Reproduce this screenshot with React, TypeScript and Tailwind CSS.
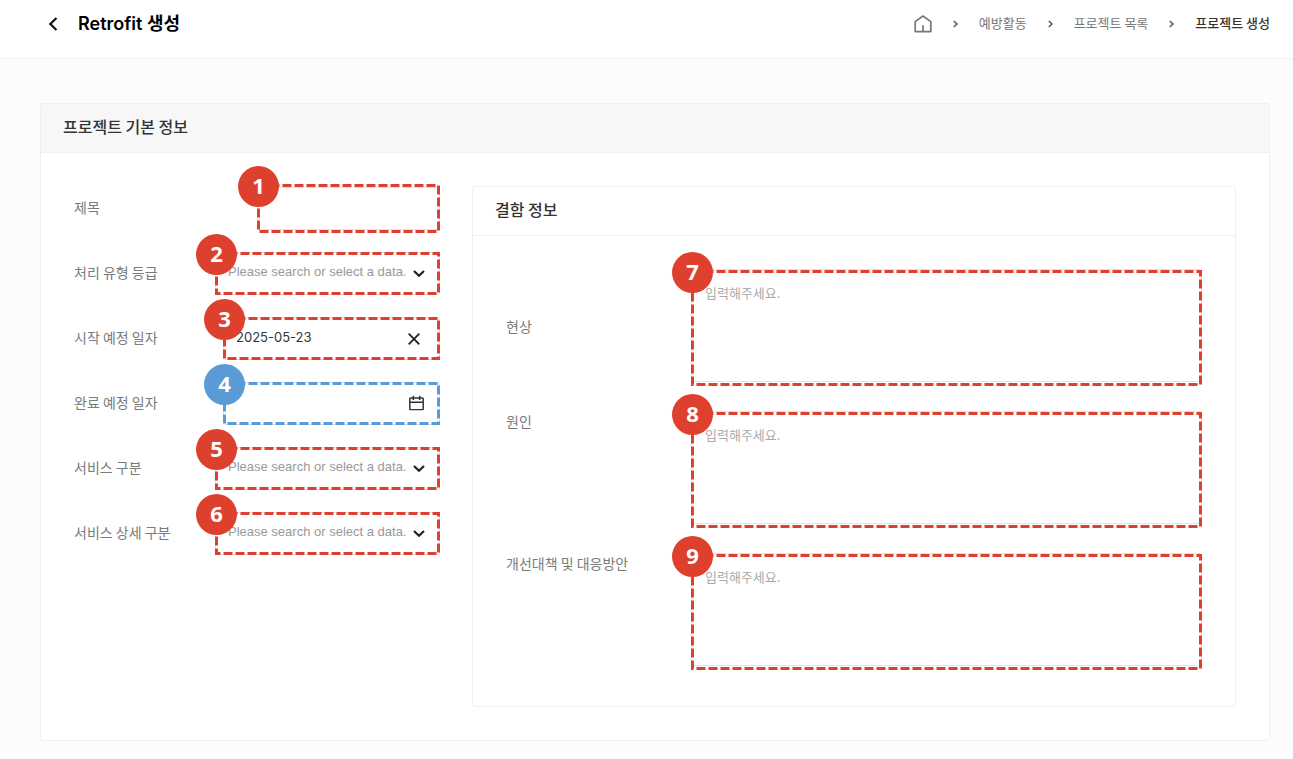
import React from "react";

const SELECT_HINT = "Please search or select a data.";

type Tone = "red" | "blue";

function Marker({ n, tone = "red", area = "inset-0" }: { n: number; tone?: Tone; area?: string }) {
  const stroke = tone === "red" ? "stroke-[#de402e]" : "stroke-[#5b9bd5]";
  const fill = tone === "red" ? "bg-[#de402e]" : "bg-[#5b9bd5]";
  return (
    <div className={`pointer-events-none absolute ${area}`}>
      <svg className="block h-full w-full overflow-visible" aria-hidden="true">
        <rect
          x="1.5"
          y="1.5"
          className={`h-[calc(100%-3px)] w-[calc(100%-3px)] fill-none ${stroke}`}
          strokeWidth="3"
          strokeDasharray="9 3"
        />
      </svg>
      <span
        className={`absolute -top-[18px] -left-[19px] flex size-[41px] items-center justify-center rounded-full pb-1 font-['Noto_Sans',sans-serif] text-[22px] leading-none font-bold text-white ${fill}`}
      >
        {n}
      </span>
    </div>
  );
}

function ChevronDown() {
  return (
    <svg
      className="pointer-events-none absolute top-1/2 right-[15px] -translate-y-1/2"
      width="12"
      height="9"
      viewBox="0 0 12 9"
      fill="none"
      stroke="#222"
      strokeWidth="2.2"
      aria-hidden="true"
    >
      <path d="M1 1.5 6 6.3 11 1.5" />
    </svg>
  );
}

function Separator() {
  return (
    <svg width="5" height="8" viewBox="0 0 5 8" fill="none" stroke="#555" strokeWidth="1.5" aria-hidden="true">
      <path d="M.8 1 4 4 .8 7" />
    </svg>
  );
}

const control =
  "block h-[43px] w-full appearance-none rounded-[3px] border border-[#dfe2e7] bg-white px-3 pb-1 text-[13px] outline-none";

function Row({ id, label, width, children }: { id: string; label: string; width: string; children: React.ReactNode }) {
  return (
    <div className="flex items-center">
      <label htmlFor={id} className="flex-1 pb-1 text-sm text-[#7a7a7a]">
        {label}
      </label>
      <div className={`relative ${width}`}>{children}</div>
    </div>
  );
}

function SelectRow({ id, label, n }: { id: string; label: string; n: number }) {
  return (
    <Row id={id} label={label} width="w-[225px]">
      <select id={id} defaultValue="" className={`${control} font-['Liberation_Sans',sans-serif] text-[#999]`}>
        <option value="">{SELECT_HINT}</option>
      </select>
      <ChevronDown />
      <Marker n={n} />
    </Row>
  );
}

function TextRow({ id, label, n, align }: { id: string; label: string; n: number; align: string }) {
  return (
    <div className={`flex ${align}`}>
      <label htmlFor={id} className="w-[185px] text-sm text-[#7a7a7a]">
        {label}
      </label>
      <div className="relative flex-1">
        <textarea
          id={id}
          placeholder="입력해주세요."
          className="block h-[113px] w-full resize-none rounded-[3px] border border-[#dfe2e7] bg-white px-[13px] py-[13px] text-[13px] leading-5 outline-none placeholder:text-[#aaa]"
        />
        <Marker n={n} area="inset-x-0 top-px -bottom-1" />
      </div>
    </div>
  );
}

export default function App() {
  return (
    <div className="min-h-screen bg-[#fcfcfc] pb-[17px] font-['Noto_Sans_CJK_KR',sans-serif] text-[#333]">
      <header className="flex h-[59px] items-center justify-between border-b border-[#f1f1f1] bg-white pr-[23px] pb-[10px] pl-12">
        <div className="flex items-center gap-5">
          <button type="button" aria-label="뒤로" className="flex">
            <svg width="10" height="14" viewBox="0 0 10 14" fill="none" stroke="#111" strokeWidth="2.2">
              <path d="M8.5 1 2.3 7l6.2 6" />
            </svg>
          </button>
          <h1 className="font-['Inter','Noto_Sans_CJK_KR',sans-serif] text-lg leading-7 font-semibold text-black">
            Retrofit 생성
          </h1>
        </div>
        <nav className="flex items-center gap-[21px] text-[13px] leading-5 text-[#777]">
          <a href="#home" aria-label="홈" className="flex">
            <svg width="18" height="18" viewBox="0 0 18 18" fill="none" stroke="#777" strokeWidth="1.7" strokeLinejoin="round">
              <path d="M1.2 6.6 9 1l7.8 5.6V16.6H1.2Z" />
              <path d="M9 10.2V16.6" />
            </svg>
          </a>
          <Separator />
          <a href="#prevention" className="pb-0.5">예방활동</a>
          <Separator />
          <a href="#projects" className="pb-0.5">프로젝트 목록</a>
          <Separator />
          <a href="#create" aria-current="page" className="pb-0.5 font-medium text-[#333]">
            프로젝트 생성
          </a>
        </nav>
      </header>

      <main className="mt-11 mr-[23px] ml-10 rounded-[3px] border border-[#f0f0f0] bg-white">
        <h2 className="flex h-[49px] items-center border-b border-[#f0f0f0] bg-[#f7f7f7] px-[22px] pb-1 text-base font-medium">
          프로젝트 기본 정보
        </h2>
        <form className="flex items-start gap-8 p-[33px]">
          <div className="mt-px flex w-[366px] flex-col gap-[22px]">
            <Row id="title" label="제목" width="w-[183px]">
              <input id="title" type="text" className={control} />
              <Marker n={1} area="inset-x-0 -inset-y-[3px]" />
            </Row>
            <SelectRow id="grade" label="처리 유형 등급" n={2} />
            <Row id="start" label="시작 예정 일자" width="w-[217px]">
              <input
                id="start"
                type="text"
                defaultValue="2025-05-23"
                className={`${control} font-['Inter',sans-serif] text-[#333]`}
              />
              <button type="button" aria-label="지우기" className="absolute top-1/2 right-5 -translate-y-1/2">
                <svg width="12" height="12" viewBox="0 0 12 12" fill="none" stroke="#222" strokeWidth="1.8">
                  <path d="m.7.7 10.6 10.6M11.3.7.7 11.3" />
                </svg>
              </button>
              <Marker n={3} />
            </Row>
            <Row id="end" label="완료 예정 일자" width="w-[217px]">
              <input id="end" type="text" className={`${control} font-['Inter',sans-serif] text-[#333]`} />
              <button type="button" aria-label="달력" className="absolute top-1/2 right-4 -translate-y-1/2 pb-0.5">
                <svg width="15" height="15" viewBox="0 0 15 15" fill="none" stroke="#333" strokeWidth="1.5">
                  <rect x=".8" y="2.5" width="13.4" height="11.7" rx=".8" />
                  <path d="M.8 6.8h13.4M4.3 0v4.5M10.7 0v4.5" />
                </svg>
              </button>
              <Marker n={4} tone="blue" />
            </Row>
            <SelectRow id="service" label="서비스 구분" n={5} />
            <SelectRow id="service-detail" label="서비스 상세 구분" n={6} />
          </div>

          <section className="min-w-0 flex-1 rounded-[3px] border border-[#f0f0f0]">
            <h3 className="flex h-[49px] items-center border-b border-[#f0f0f0] px-[22px] pb-1 text-base font-medium">
              결함 정보
            </h3>
            <div className="flex flex-col gap-[29px] px-[33px] pt-[33px] pb-10">
              <TextRow id="symptom" label="현상" n={7} align="items-center" />
              <TextRow id="cause" label="원인" n={8} align="items-start" />
              <TextRow id="plan" label="개선대책 및 대응방안" n={9} align="items-start" />
            </div>
          </section>
        </form>
      </main>
    </div>
  );
}
